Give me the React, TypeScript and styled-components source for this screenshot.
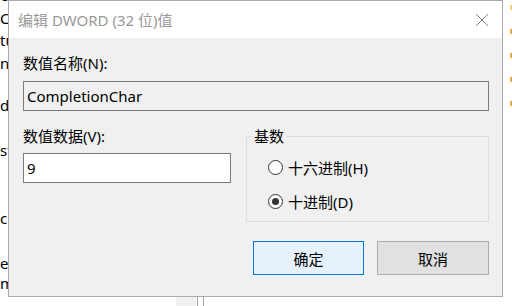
import styled, { createGlobalStyle } from 'styled-components';

const GlobalStyle = createGlobalStyle`
  html, body {
    margin: 0;
    padding: 0;
    background: #ffffff;
  }
  body {
    font-family: "Segoe UI", "Noto Sans", "Noto Sans CJK SC", sans-serif;
  }
`;

const Screen = styled.div`
  position: relative;
  width: 512px;
  height: 306px;
  overflow: hidden;
  background: #ffffff;
  display: grid;
  grid-template-rows: 297px 9px;
`;

const Backdrop = styled.div`
  display: flex;
`;

// what is left visible of the registry value list behind the dialog
const ValueList = styled.div`
  width: 8px;
  overflow: hidden;
  display: flex;
  flex-direction: column;
  font-size: 15px;
  color: #000;
`;

const ValueLine = styled.div<{ $gap: number }>`
  margin-top: ${p => p.$gap}px;
  height: 20px;
  line-height: 20px;
  white-space: nowrap;
`;

const TreeIcons = styled.div`
  margin-left: auto;
  width: 2px;
  display: flex;
  flex-direction: column;
  padding-top: 5px;
  gap: 19px;
`;

const Folder = styled.div<{ $tone: string }>`
  width: 2px;
  height: 5px;
  background: ${p => p.$tone};
`;

const BottomStrip = styled.div`
  display: flex;
  padding-left: 176px;
`;

const ScrollBlock = styled.div`
  width: 20px;
  background: #f0f0f0;
`;

const Splitter = styled.div<{ $space: number }>`
  width: 1px;
  margin-left: ${p => p.$space}px;
  background: #a0a0a0;
`;

const Dialog = styled.div`
  position: absolute;
  left: 8px;
  top: 0;
  width: 495px;
  height: 297px;
  box-sizing: border-box;
  border: 1px solid #aaaaaa;
  background: #f0f0f0;
  display: flex;
  flex-direction: column;
  font-family: "Segoe UI", "Noto Sans", "Noto Sans CJK SC", sans-serif;
  font-size: 15px;
  color: #000;
`;

const TitleBar = styled.div`
  height: 37px;
  flex: none;
  background: #ffffff;
  display: flex;
  align-items: center;
  justify-content: space-between;
  padding: 0 13px 0 9px;
`;

const Title = styled.span`
  font-size: 15px;
  color: #999999;
  line-height: 20px;
`;

const Body = styled.div`
  padding: 15px 13px 0 14px;
  display: flex;
  flex-direction: column;
`;

const Label = styled.div`
  line-height: 20px;
  height: 20px;
  white-space: nowrap;
`;

const TextBox = styled.div<{ $readonly?: boolean; $top: number }>`
  box-sizing: border-box;
  height: 30px;
  margin-top: ${p => p.$top}px;
  border: 1px solid #7a7a7a;
  background: ${p => (p.$readonly ? '#f0f0f0' : '#ffffff')};
  padding-left: 3px;
  display: flex;
  align-items: center;
  white-space: nowrap;
`;

const Columns = styled.div`
  display: flex;
  gap: 15px;
  margin-top: 15px;
`;

const LeftCol = styled.div`
  width: 208px;
  display: flex;
  flex-direction: column;
`;

const RightCol = styled.div`
  flex: 1;
  display: flex;
  flex-direction: column;
`;

const GroupBox = styled.fieldset`
  margin: 0;
  min-width: 0;
  border: 1px solid #dcdcdc;
  padding: 11px 0 10px 5px;
  display: flex;
  flex-direction: column;
  gap: 14px;
`;

const Legend = styled.legend`
  padding: 0 2px;
  line-height: 20px;
`;

const RadioRow = styled.label`
  display: flex;
  align-items: center;
  gap: 5px;
  height: 20px;
  margin-left: 16px;
  white-space: nowrap;
`;

const RadioDot = styled.span<{ $checked?: boolean }>`
  width: 15px;
  height: 15px;
  box-sizing: border-box;
  border-radius: 50%;
  border: 1px solid #333333;
  background: #ffffff;
  display: flex;
  align-items: center;
  justify-content: center;
  &::after {
    content: '';
    width: 7px;
    height: 7px;
    border-radius: 50%;
    background: ${p => (p.$checked ? '#333333' : 'transparent')};
  }
`;

const ButtonRow = styled.div`
  display: flex;
  justify-content: flex-end;
  gap: 13px;
  margin-top: 19px;
`;

const Button = styled.button<{ $primary?: boolean; $w: number }>`
  width: ${p => p.$w}px;
  height: 34px;
  box-sizing: border-box;
  margin: 0;
  padding: 0;
  font: inherit;
  color: #000;
  border: 1px solid ${p => (p.$primary ? '#0078d7' : '#adadad')};
  background: ${p => (p.$primary ? '#e5f1fb' : '#e1e1e1')};
`;

const bgLines = [
  { text: 'e', gap: -15 },
  { text: 'C', gap: 3 },
  { text: 'tu', gap: 2 },
  { text: 'nc', gap: 3 },
  { text: 'd', gap: 22 },
  { text: 'st', gap: 25 },
  { text: 'c', gap: 48 },
  { text: 'e', gap: 25 },
  { text: 'm', gap: 0 },
];

export default function App() {
  return (
    <>
      <GlobalStyle />
      <Screen>
        <Backdrop>
          <ValueList>
            {bgLines.map((l, i) => (
              <ValueLine key={i} $gap={l.gap}>{l.text}</ValueLine>
            ))}
          </ValueList>
          <TreeIcons>
            <Folder $tone="#f3d27a" />
            <Folder $tone="#e8a64a" />
            <Folder $tone="#e8a64a" />
            <Folder $tone="#e8a64a" />
            <Folder $tone="#e8a64a" />
          </TreeIcons>
        </Backdrop>
        <BottomStrip>
          <ScrollBlock />
          <Splitter $space={1} />
          <Splitter $space={5} />
        </BottomStrip>

        <Dialog>
          <TitleBar>
            <Title>编辑 DWORD (32 位)值</Title>
            <svg width="14" height="14" viewBox="0 0 14 14">
              <path d="M1 1 L13 13 M13 1 L1 13" stroke="#808080" strokeWidth="1" fill="none" />
            </svg>
          </TitleBar>
          <Body>
            <Label>数值名称(N):</Label>
            <TextBox $readonly $top={8}>CompletionChar</TextBox>
            <Columns>
              <LeftCol>
                <Label>数值数据(V):</Label>
                <TextBox $top={7}>9</TextBox>
              </LeftCol>
              <RightCol>
                <GroupBox>
                  <Legend>基数</Legend>
                  <RadioRow>
                    <RadioDot />
                    十六进制(H)
                  </RadioRow>
                  <RadioRow>
                    <RadioDot $checked />
                    十进制(D)
                  </RadioRow>
                </GroupBox>
                <ButtonRow>
                  <Button $primary $w={111}>确定</Button>
                  <Button $w={112}>取消</Button>
                </ButtonRow>
              </RightCol>
            </Columns>
          </Body>
        </Dialog>
      </Screen>
    </>
  );
}
